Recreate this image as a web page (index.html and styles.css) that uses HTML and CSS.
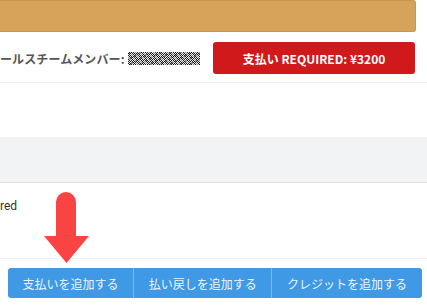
FILE: index.html
```html
<!DOCTYPE html>
<html lang="ja">
<head>
  <meta charset="UTF-8" />
  <meta name="viewport" content="width=device-width, initial-scale=1.0"/>
  <title>支払い</title>
  <link rel="stylesheet" href="styles.css">
</head>
<body>

  <!-- Status banner -->
  <div class="banner"></div>

  <!-- Member row -->
  <div class="member-row">
    <div class="member">
      <span class="member-label">ールスチームメンバー:</span>
      <span class="redacted"></span>
    </div>
    <button class="btn-required">支払い REQUIRED: ¥3200</button>
  </div>

  <!-- Panel -->
  <div class="panel">
    <div class="panel-head"></div>
    <div class="panel-body">
      <p class="status-text">red</p>
      <svg class="arrow" width="46" height="72" viewBox="0 0 46 72">
        <path d="M12 10 a10 10 0 0 1 20 0 V44 H45 L22.5 71 L0 44 H12 Z" fill="#fa4444"/>
      </svg>
    </div>
    <div class="actions">
      <button class="btn-action">支払いを追加する</button>
      <button class="btn-action">払い戻しを追加する</button>
      <button class="btn-action">クレジットを追加する</button>
    </div>
  </div>

</body>
</html>
```

FILE: styles.css
```css
body {
  margin: 0;
  font-family: "Noto Sans CJK JP", "Noto Sans", sans-serif;
  background: #fff;
  color: #333;
  overflow: hidden;
}

.banner {
  box-sizing: border-box;
  width: 416px;
  height: 32px;
  background: #d6a35a;
  border: 1px solid #c9964f;
  border-left: none;
  border-radius: 0 3px 3px 0;
}

.member-row {
  display: flex;
  justify-content: space-between;
  align-items: center;
  padding: 10px 12px 8px 0;
  border-bottom: 1px solid #eeeeee;
}

.member {
  display: flex;
  align-items: center;
  gap: 3px;
}

.member-label {
  font-size: 12px;
  font-weight: 700;
  color: #555;
  letter-spacing: 0.1px;
}

.redacted {
  display: inline-block;
  width: 72px;
  height: 13px;
  background:
    repeating-linear-gradient(60deg, rgba(255,255,255,0.45) 0 1px, transparent 1px 4px),
    repeating-linear-gradient(-30deg, rgba(0,0,0,0.4) 0 1px, transparent 1px 5px),
    repeating-conic-gradient(#1e1e1e 0 25%, #e6e6e6 0 50%) 0 0 / 2px 2px;
}

.btn-required {
  width: 202px;
  height: 32px;
  border: none;
  border-radius: 3px;
  background: #d0191b;
  color: #fff;
  font-family: "Noto Sans CJK JP", "Noto Sans", sans-serif;
  font-size: 12px;
  font-weight: 700;
  cursor: pointer;
}

.panel {
  margin-top: 54px;
}

.panel-head {
  height: 45px;
  background: #f2f3f5;
  border-bottom: 1px solid #dde3e5;
}

.panel-body {
  position: relative;
  height: 75px;
  border-bottom: 1px solid #f2f2f2;
}

.status-text {
  margin: 0;
  padding-top: 16px;
  font-family: Roboto, "Liberation Sans", sans-serif;
  font-size: 12px;
  color: #333;
}

.arrow {
  position: absolute;
  left: 44px;
  top: 9px;
}

.actions {
  display: flex;
  margin: 9px 0 0 8px;
}

.btn-action {
  height: 30px;
  padding: 0 14.6px;
  border: none;
  border-left: 1px solid #7fbaee;
  background: #3f99e4;
  color: #eef5fd;
  font-family: "Noto Sans CJK JP", "Noto Sans", sans-serif;
  font-size: 12px;
  cursor: pointer;
}

.btn-action:first-child {
  border-left: none;
  border-radius: 3px 0 0 3px;
}

.btn-action:last-child {
  border-radius: 0 3px 3px 0;
}
```
